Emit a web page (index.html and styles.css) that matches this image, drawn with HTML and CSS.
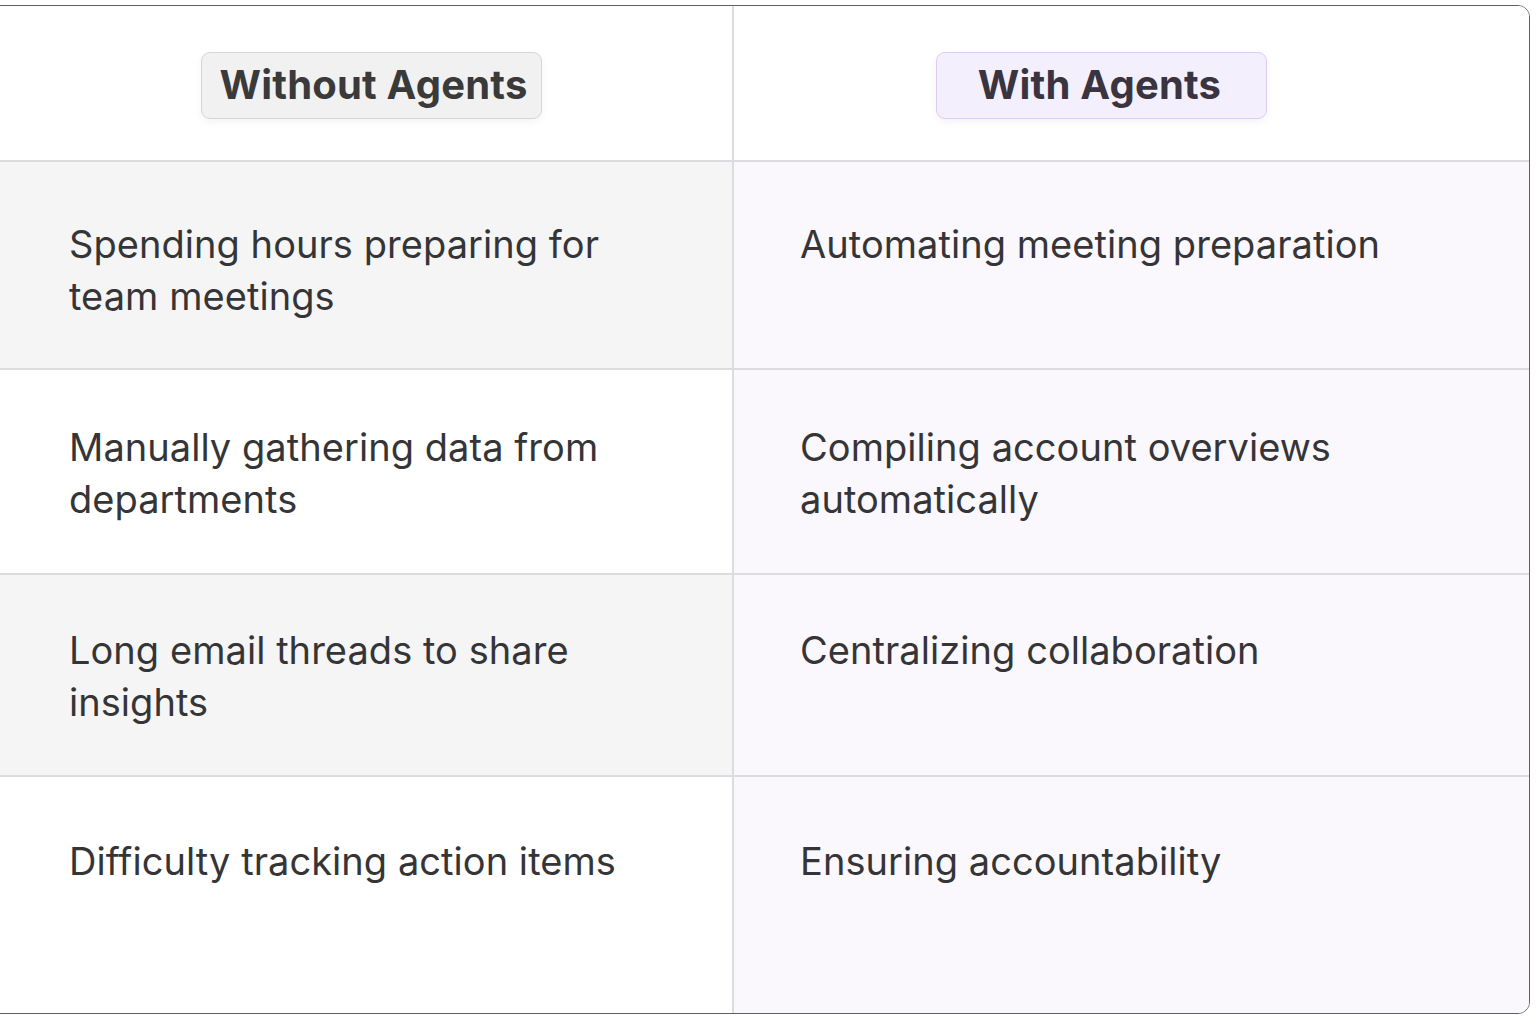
FILE: index.html
```html
<!DOCTYPE html>
<html>
<head>
<meta charset="utf-8">
<link rel="stylesheet" href="styles.css">
</head>
<body>
<div class="card">
  <div class="row row-head">
    <div class="cell cell-left head-left"><span class="pill pill-without">Without Agents</span></div>
    <div class="cell cell-right head-right"><span class="pill pill-with">With Agents</span></div>
  </div>
  <div class="row row-1">
    <div class="cell cell-left shade">Spending hours preparing for<br>team meetings</div>
    <div class="cell cell-right">Automating meeting preparation</div>
  </div>
  <div class="row row-2">
    <div class="cell cell-left">Manually gathering data from<br>departments</div>
    <div class="cell cell-right">Compiling account overviews<br>automatically</div>
  </div>
  <div class="row row-3">
    <div class="cell cell-left shade">Long email threads to share<br>insights</div>
    <div class="cell cell-right">Centralizing collaboration</div>
  </div>
  <div class="row row-4">
    <div class="cell cell-left">Difficulty tracking action items</div>
    <div class="cell cell-right">Ensuring accountability</div>
  </div>
</div>
</body>
</html>
```

FILE: styles.css
```css
html, body {
  margin: 0;
  padding: 0;
  background: #ffffff;
  overflow: hidden;
}
body {
  width: 1536px;
  height: 1024px;
  font-family: Inter, "Noto Sans", sans-serif;
  color: #353538;
}
.card {
  margin: 5px 0 0 -12px;
  width: 1542px;
  height: 1009px;
  box-sizing: border-box;
  border: 1px solid #5b606a;
  border-radius: 12px;
  overflow: hidden;
  display: flex;
  flex-direction: column;
  background: #ffffff;
}
.row {
  display: flex;
  border-bottom: 2px solid #dcdcdf;
  box-sizing: border-box;
}
.row-head { height: 156px; }
.row-1 { height: 208px; }
.row-2 { height: 205px; }
.row-3 { height: 202px; }
.row-4 { flex: 1; border-bottom: none; }

.cell {
  box-sizing: border-box;
  font-size: 38px;
  line-height: 52px;
  letter-spacing: 0.05px;
}
.cell-left {
  width: 745px;
  border-right: 2px solid #dcdcdf;
  padding-left: 80px;
  background: #ffffff;
}
.cell-right {
  flex: 1;
  padding-left: 66px;
  background: #faf8fd;
}
.cell-left.shade { background: #f5f5f6; }

.row-1 .cell { padding-top: 56px; }
.row-2 .cell { padding-top: 51px; }
.row-3 .cell { padding-top: 49px; }
.row-4 .cell { padding-top: 58px; }

.row-head .cell {
  background: #ffffff;
  display: flex;
  align-items: center;
  padding-top: 4px;
}
.head-left { padding-left: 212px; }
.head-right { padding-left: 202px; }

.pill {
  display: flex;
  align-items: center;
  justify-content: center;
  box-sizing: border-box;
  height: 67px;
  border-radius: 9px;
  font-size: 40px;
  font-weight: 700;
  letter-spacing: 0.2px;
  box-shadow: 0 3px 8px rgba(0, 0, 0, 0.05);
}
.pill-without {
  width: 341px;
  padding-left: 4px;
  background: #f1f1f1;
  border: 1.5px solid #d6d6d8;
  color: #3a3a3b;
}
.pill-with {
  width: 331px;
  padding-right: 4px;
  background: #f4effc;
  border: 1.5px solid #ddccf6;
  color: #3a3340;
}
```
